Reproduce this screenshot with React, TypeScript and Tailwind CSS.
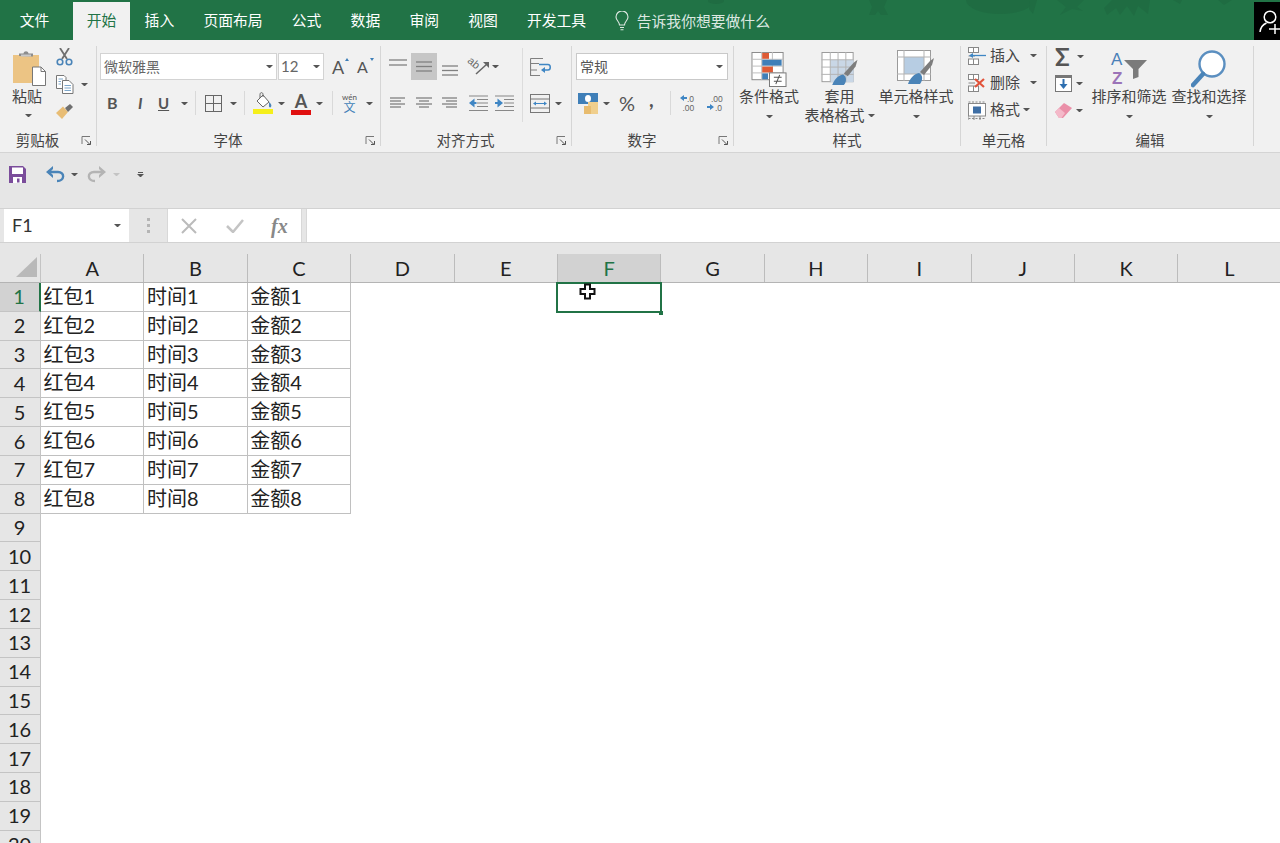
import React from "react";

const Caret = ({ c = "border-t-[#555]", className = "" }: { c?: string; className?: string }) => (
  <span className={`block h-0 w-[7px] shrink-0 border-x-[3px] border-t-[3.5px] border-x-transparent ${c} ${className}`} />
);

const Launcher = () => (
  <svg width="11" height="11" viewBox="0 0 11 11" fill="none" stroke="#777" strokeWidth="1">
    <path d="M1 9V1.500H9" />
    <path d="M4 4.500L9 9.500M9.500 6V9.500H6" stroke="#555" />
  </svg>
);

const Sep = () => <div className="my-[6px] h-[100px] w-px shrink-0 bg-[#d6d6d6]" />;
const MiniSep = ({ className = "" }: { className?: string }) => <span className={`block h-[24px] w-px shrink-0 bg-[#d9d9d9] ${className}`} />;

function Group({ w, label, launcher, children }: { w: string; label: string; launcher?: boolean; children: React.ReactNode }) {
  return (
    <div className={`flex h-[112px] shrink-0 flex-col ${w}`}>
      <div className="flex h-[91px]">{children}</div>
      <div className="flex h-[21px] items-center pb-[2px]">
        <div className="flex-1 text-center text-[14.500px] leading-[20px] text-[#444]">{label}</div>
        {launcher && (
          <div className="flex w-[21px] justify-end pr-[4px]">
            <Launcher />
          </div>
        )}
      </div>
    </div>
  );
}

function Big({ icon, l1, l2, caretInline, className = "" }: { icon: React.ReactNode; l1: string; l2?: string; caretInline?: boolean; className?: string }) {
  return (
    <div className={`flex shrink-0 flex-col items-center pt-[10px] ${className}`}>
      <div className="flex h-[37px] items-start justify-center">{icon}</div>
      <div className="whitespace-nowrap text-[15px] leading-[19px] text-[#444]">{l1}</div>
      <div className="flex h-[19px] items-center justify-center gap-[3px] whitespace-nowrap text-[15px] leading-[19px] text-[#444]">
        {l2}
        <Caret className={caretInline ? "" : "mt-[1px]"} />
      </div>
    </div>
  );
}

const Lines = ({ w, h, rows }: { w: number; h: number; rows: [number, number, number][] }) => (
  <svg width={w} height={h} viewBox={`0 0 ${w} ${h}`} stroke="#808080" strokeWidth="1.300">
    {rows.map(([a, b, y], i) => (
      <path key={i} d={`M${a} ${y}H${b}`} />
    ))}
  </svg>
);

const PasteIcon = () => (
  <svg className="shrink-0" width="34" height="36" viewBox="0 0 34 36">
    <rect x="1" y="5" width="26" height="28" fill="#ecc484" />
    <path d="M7 6V3.500H11.500C12 .5 16 .5 16.500 3.500H21V6.500Z" fill="#8d8d8d" />
    <rect x="9" y="4.500" width="10" height="2" fill="#c9c9c9" />
    <path d="M20.500 17H29L33.500 21.500V35.500H20.500Z" fill="#fff" stroke="#777" />
    <path d="M29 17V21.500H33.500" fill="none" stroke="#777" />
  </svg>
);
const Scissors = () => (
  <svg width="17" height="18" viewBox="0 0 17 18" fill="none">
    <path d="M4 0L11 11M13 0L6 11" stroke="#6f6f6f" strokeWidth="1.800" />
    <circle cx="4" cy="14" r="2.800" stroke="#4a84b8" strokeWidth="1.600" />
    <circle cx="13" cy="14" r="2.800" stroke="#4a84b8" strokeWidth="1.600" />
  </svg>
);
const CopyIcon = () => (
  <svg width="18" height="19" viewBox="0 0 18 19" fill="#fff" stroke="#777">
    <path d="M.5 .5H8L10 2.500V13.500H.5Z" />
    <path d="M6.500 5.500H13L17 9.500V18.500H6.500Z" />
    <path d="M8.500 10.500H15M8.500 13H15M8.500 15.500H15" stroke="#7da7cb" />
    <path d="M2.500 4H7M2.500 6.500H5M2.500 9H5" stroke="#7da7cb" />
  </svg>
);
const BrushIcon = () => (
  <svg width="17" height="16" viewBox="0 0 17 16">
    <path d="M0 9L7 2.500L12 8L6 15Z" fill="#e8bd75" />
    <path d="M9 4L14 0L17 3L12 8Z" fill="#6f6f6f" />
  </svg>
);
const BorderIcon = () => (
  <svg width="17" height="17" viewBox="0 0 17 17" fill="none" stroke="#666">
    <rect x=".5" y=".5" width="16" height="16" />
    <path d="M8.500 0V17M0 8.500H17" />
  </svg>
);
const FillIcon = () => (
  <svg width="20" height="23" viewBox="0 0 20 23">
    <path d="M4 9L10 3L16 10L10 15Z" fill="#fff" stroke="#666" />
    <path d="M7 6V2.500C7 0 10 0 10 2.500V5" fill="none" stroke="#666" />
    <path d="M16 10C18 12 19 13 18 15C17 16 15.500 15 16 13Z" fill="#4a84b8" />
    <rect x="0" y="17" width="20" height="5" fill="#f5ef1b" />
  </svg>
);
const OrientIcon = () => (
  <svg className="overflow-visible" width="21" height="20" viewBox="0 0 21 20">
    <text x="0" y="5" fontSize="11" fill="#666" transform="translate(1 1) rotate(40)" fontFamily="Liberation Sans">ab</text>
    <path d="M7 17L18 7" stroke="#666" strokeWidth="1.500" />
    <path d="M14 5H20V11Z" fill="#666" />
  </svg>
);
const IndentDec = () => (
  <svg width="19" height="17" viewBox="0 0 19 17" stroke="#888" strokeWidth="1.200">
    <path d="M0 1H19M8 4.500H19M8 8H19M8 11.500H19M0 15.500H19" />
    <path d="M0 8L5.500 3.500V12.500Z" fill="#3f86c4" stroke="none" />
    <path d="M4 8H7.500" stroke="#3f86c4" strokeWidth="2" />
  </svg>
);
const IndentInc = () => (
  <svg width="19" height="17" viewBox="0 0 19 17" stroke="#888" strokeWidth="1.200">
    <path d="M0 1H19M9 4.500H19M9 8H19M9 11.500H19M0 15.500H19" />
    <path d="M8 8L2.500 3.500V12.500Z" fill="#3f86c4" stroke="none" />
    <path d="M0 8H4" stroke="#3f86c4" strokeWidth="2" />
  </svg>
);
const WrapIcon = () => (
  <svg width="22" height="20" viewBox="0 0 22 20" fill="none" stroke="#808080" strokeWidth="1.200">
    <path d="M.5 1.500H13M.5 1.500V18.500H10M.5 6.500H9M.5 13H7" />
    <path d="M9 7.500H18C21 7.500 21 13 18 13H13" stroke="#3f86c4" strokeWidth="1.500" />
    <path d="M11 13L15 10V16Z" fill="#3f86c4" stroke="none" />
  </svg>
);
const MergeIcon = () => (
  <svg width="20" height="19" viewBox="0 0 20 19" fill="none" stroke="#777">
    <rect x=".5" y=".5" width="19" height="18" />
    <path d="M0 5H20M0 14H20" />
    <path d="M4 9.500H16" stroke="#3f86c4" />
    <path d="M3 9.500L6 7.500V11.500ZM17 9.500L14 7.500V11.500Z" fill="#3f86c4" stroke="none" />
  </svg>
);
const Accounting = () => (
  <svg width="20" height="21" viewBox="0 0 20 21">
    <rect x="0" y="0" width="20" height="11" fill="#3f7fb8" />
    <ellipse cx="10" cy="5.500" rx="3" ry="3.500" fill="#fff" />
    <rect x="10" y="9" width="10" height="12" fill="#f0cf8d" />
    <rect x="6" y="13" width="7" height="8" fill="#e8bc6f" />
  </svg>
);
const DecInc = () => (
  <svg width="17" height="18" viewBox="0 0 17 18" fontFamily="Liberation Sans" fontSize="8.500" fill="#666">
    <text x="7" y="7.500">.0</text>
    <text x="2.500" y="16.500">.00</text>
    <path d="M0 4L4 1V3H7V5H4V7Z" fill="#3f86c4" />
  </svg>
);
const DecDec = () => (
  <svg width="17" height="18" viewBox="0 0 17 18" fontFamily="Liberation Sans" fontSize="8.500" fill="#666">
    <text x="4" y="7.500">.00</text>
    <text x="8" y="16.500">.0</text>
    <path d="M7 13L3 10V12H0V14H3V16Z" fill="#3f86c4" />
  </svg>
);
const CondIcon = () => (
  <svg className="mt-[2px]" width="36" height="35" viewBox="0 0 36 36">
    <rect x=".5" y=".5" width="32" height="28" fill="#fff" stroke="#8a8a8a" />
    <path d="M0 7.500H33M0 14.500H33M0 21.500H33M10.500 0V29M21.500 0V29" stroke="#bdbdbd" />
    <rect x="11" y="1" width="7" height="6" fill="#de5b35" />
    <rect x="11" y="8" width="20" height="6" fill="#3f7fb8" />
    <rect x="11" y="15" width="11" height="6" fill="#de5b35" />
    <rect x="11" y="22" width="6" height="6" fill="#3f7fb8" />
    <rect x="18.500" y="21.500" width="17" height="14" fill="#fff" stroke="#777" />
    <path d="M23 26H31M23 30H31M29 23.500L25 33" stroke="#555" strokeWidth="1.100" fill="none" />
  </svg>
);
const BrushTail = ({ x, y }: { x: number; y: number }) => (
  <g transform={`translate(${x} ${y})`}>
    <path d="M3 14L13 3L17 0L15 7L7 17Z" fill="#7d7d7d" />
    <path d="M-9 26C-7 20 -3 16 2 15C6 17 6 22 3 26Z" fill="#4a84b8" />
  </g>
);
const TableStyleIcon = () => (
  <svg className="mt-[2px]" width="38" height="36" viewBox="0 0 38 37">
    <rect x=".5" y=".5" width="32" height="30" fill="#fff" stroke="#9a9a9a" />
    <rect x="9" y="8" width="24" height="23" fill="#c9d7e6" />
    <path d="M0 8H33M0 15.500H33M0 23H33M9 0V31M17 0V31M25 0V31" stroke="#b3b3b3" />
    <BrushTail x={20} y={8} />
  </svg>
);
const CellStyleIcon = () => (
  <svg width="38" height="37" viewBox="0 0 38 37">
    <rect x=".5" y=".5" width="33" height="30" fill="#fff" stroke="#9a9a9a" />
    <rect x="7" y="7" width="20" height="17" fill="#b7cde3" />
    <path d="M0 7H34M0 24H34M7 0V31M27 0V31" stroke="#b3b3b3" />
    <BrushTail x={20} y={8} />
  </svg>
);
const InsertIcon = () => (
  <svg width="18" height="18" viewBox="0 0 18 18" fill="#fff" stroke="#888">
    <rect x=".5" y=".5" width="10" height="5" />
    <rect x=".5" y="12" width="10" height="5.500" />
    <path d="M5.500 12V18M5.500 0V5.500M.5 9H7" />
    <path d="M4 8.500H18" stroke="#3f86c4" strokeWidth="1.300" />
    <path d="M1 8.500L5 6V11Z" fill="#3f86c4" stroke="none" />
  </svg>
);
const DeleteIcon = () => (
  <svg width="18" height="18" viewBox="0 0 18 18" fill="#fff" stroke="#888">
    <rect x=".5" y=".5" width="10" height="5" />
    <rect x=".5" y="12" width="10" height="5.500" />
    <path d="M5.500 12V18M5.500 0V5.500M.5 9H7" />
    <path d="M7 5L16 13M16 5L7 13" stroke="#e2533a" strokeWidth="2.200" />
  </svg>
);
const FormatIcon = () => (
  <svg width="18" height="20" viewBox="0 0 18 20" fill="#fff" stroke="#888">
    <path d="M.5 2H17.500M.5 18.500H17.500" strokeDasharray="2 1.500" />
    <rect x=".5" y="3.500" width="17" height="12.500" />
    <rect x="5" y="6.500" width="8" height="7" fill="#3f6fa5" stroke="none" />
    <path d="M0 16V20M6 16V20M12 16V20" />
  </svg>
);
const FillDown = () => (
  <svg width="17" height="17" viewBox="0 0 17 17" fill="#fff" stroke="#777">
    <rect x=".5" y=".5" width="16" height="16" />
    <path d="M0 2H17" strokeWidth="2" />
    <path d="M8.500 4V10" stroke="#2f6fb0" strokeWidth="2" />
    <path d="M4.500 9H12.500L8.500 14Z" fill="#2f6fb0" stroke="none" />
  </svg>
);
const Eraser = () => (
  <svg width="17" height="15" viewBox="0 0 17 15">
    <path d="M0 9L9 0L17 5L8 15H4Z" fill="#ea8fa8" />
    <path d="M0 9L4 5L10 10L6.500 15H4Z" fill="#f4b9c9" />
  </svg>
);
const SortIcon = () => (
  <svg className="overflow-visible" width="36" height="36" viewBox="0 0 36 36" fontFamily="Liberation Sans" fontSize="17">
    <text x="0" y="15" fill="#4a80b8">A</text>
    <text x="1" y="34" fill="#9b73b8" fontWeight="bold">Z</text>
    <path d="M13 10H36L27.500 19V27L22 29V19Z" fill="#7b7b7b" />
  </svg>
);
const FindIcon = () => (
  <svg width="36" height="38" viewBox="0 0 36 38" fill="none">
    <circle cx="21" cy="14" r="12.500" fill="#fff" stroke="#5b8fc0" strokeWidth="2.400" />
    <path d="M12 24L2 35" stroke="#4a84b8" strokeWidth="4.500" strokeLinecap="round" />
  </svg>
);
const SaveIcon = () => (
  <svg width="17" height="17" viewBox="0 0 17 17">
    <path d="M0 0H14L17 3V17H0Z" fill="#7b4d9b" />
    <rect x="3" y="1.500" width="11" height="6.500" fill="#fff" />
    <rect x="4" y="11" width="9" height="6" fill="#fff" />
    <rect x="8" y="12.500" width="2.500" height="4" fill="#7b4d9b" />
  </svg>
);
const Undo = ({ c }: { c: string }) => (
  <svg width="19" height="17" viewBox="0 0 19 17" fill="none">
    <path d="M2 6H12C19 6 19 15 11 15" stroke={c} strokeWidth="2.400" />
    <path d="M0 6L7 0V3L4 6L7 9V12Z" fill={c} />
  </svg>
);
const Redo = ({ c }: { c: string }) => (
  <svg className="-scale-x-100" width="19" height="17" viewBox="0 0 19 17" fill="none">
    <path d="M2 6H12C19 6 19 15 11 15" stroke={c} strokeWidth="2.400" />
    <path d="M0 6L7 0V3L4 6L7 9V12Z" fill={c} />
  </svg>
);
const Bulb = () => (
  <svg width="14" height="20" viewBox="0 0 14 20" fill="none" stroke="#dfe9e3" strokeWidth="1.100">
    <path d="M4.500 14C4.500 10.500 1 9.500 1 6A6 6 0 0 1 13 6C13 9.500 9.500 10.500 9.500 14Z" />
    <path d="M5 16.500H9M5.500 18.800H8.500" />
  </svg>
);
const UserAdd = () => (
  <svg width="26" height="38" viewBox="0 0 26 38" fill="none" stroke="#fff" strokeWidth="1.500">
    <circle cx="16" cy="15" r="5.800" />
    <path d="M6 30C6.500 25 9 22.500 12.500 21" />
    <path d="M15 27H26M21 22V32" />
  </svg>
);
const Pattern = () => (
  <svg className="absolute left-0 top-0" width="1280" height="16" viewBox="0 0 1280 16" fill="#1f6c42">
    <ellipse cx="716" cy="1" rx="8" ry="3" />
    <path d="M869 0H887L884 7L888 15H881L878 11L875 15H869L872 7Z" />
    <ellipse cx="1000" cy="0" rx="34" ry="14" />
    <path d="M1030 0H1037L1033 14L1029 9Z" />
    <path d="M1057 0H1084L1077 7L1083 11L1072 9L1060 15L1066 7Z" opacity="0.8" />
    <path d="M1104 8L1112 0H1150L1148 14L1138 6L1134 16L1127 6L1120 15L1116 8L1107 15Z" />
    <path d="M1173 0H1182L1180 4Z" />
    <path d="M1218 0H1232L1224 5Z" />
  </svg>
);

const Cross = () => (
  <svg className="absolute left-[21px] top-[0px]" width="17" height="17" viewBox="0 0 17 17">
    <path d="M6 1.500H11V6H15.500V11H11V15.500H6V11H1.500V6H6Z" fill="#fff" stroke="#111" strokeWidth="2" />
  </svg>
);

const tabs = ["插入", "页面布局", "公式", "数据", "审阅", "视图", "开发工具"];
const cols = ["A", "B", "C", "D", "E", "F", "G", "H", "I", "J", "K", "L"];
const rows = Array.from({ length: 20 }, (_, i) => i + 1);

export default function App() {
  return (
    <div className="h-[843px] w-[1280px] overflow-hidden bg-white [font-family:Lato,'Noto_Sans_CJK_SC',sans-serif]">
      {/* Title bar */}
      <div className="relative flex h-[40px] items-end bg-[#217346]">
        <Pattern />
        <div className="relative ml-[5px] flex h-[38px] w-[59px] items-center justify-center pb-[2px] text-[14.800px] text-white">文件</div>
        <div className="relative ml-[9px] flex h-[38px] w-[57px] items-center justify-center bg-[#f1f1f1] pb-[1px] text-[14.800px] text-[#217346]">开始</div>
        {tabs.map((t) => (
          <div key={t} className="relative flex h-[38px] items-center px-[14.600px] pb-[2px] text-[14.800px] text-white">
            {t}
          </div>
        ))}
        <div className="relative ml-[14px] flex h-[38px] items-center gap-[8px] text-[14.800px] text-[#dce8e1]">
          <Bulb />
          告诉我你想要做什么
        </div>
        <div className="absolute right-0 top-[2px] h-[38px] w-[26px] overflow-hidden bg-black">
          <UserAdd />
        </div>
      </div>

      {/* Ribbon */}
      <div className="flex h-[113px] border-b border-[#d4d4d4] bg-[#f1f1f1]">
        <Group w="w-[96px]" label="剪贴板" launcher>
          <div className="ml-[12px] flex w-[32px] flex-col pt-[10px]">
            <div className="h-[37px]"><PasteIcon /></div>
            <div className="w-[30px] whitespace-nowrap text-[15px] leading-[19px] text-[#444]">粘贴</div>
            <div className="flex h-[19px] w-[32px] items-center justify-center"><Caret /></div>
          </div>
          <div className="ml-[12px] flex flex-col pt-[8px]">
            <Scissors />
            <div className="mt-[9px] flex items-center gap-[7px]">
              <CopyIcon />
              <Caret />
            </div>
            <div className="mt-[10px]">
              <BrushIcon />
            </div>
          </div>
        </Group>
        <Sep />
        <Group w="w-[283px]" label="字体" launcher>
          <div className="flex flex-col">
            <div className="mt-[13px] flex h-[27px] items-center pl-[3px]">
              <div className="flex h-[27px] w-[177px] items-center justify-between border border-[#d3d3d3] bg-white pl-[3px] pr-[3px] text-[14px] text-[#666]">
                微软雅黑
                <Caret />
              </div>
              <div className="ml-[1px] flex h-[27px] w-[46px] items-center justify-between border border-[#d3d3d3] bg-white pl-[2px] pr-[3px] text-[15px] text-[#666]">
                12
                <Caret />
              </div>
              <div className="relative ml-[8px] w-[14px] text-[18px] leading-none text-[#555]">
                A<span className="absolute right-[-3px] top-[0px] block border-x-[2.500px] border-b-[3px] border-x-transparent border-b-[#3f7fb8]" />
              </div>
              <div className="relative ml-[11px] w-[14px] text-[16px] leading-none text-[#555]">
                A<span className="absolute right-[-3px] top-[-1px] block border-x-[2.500px] border-t-[3px] border-x-transparent border-t-[#3f7fb8]" />
              </div>
            </div>
            <div className="mt-[10px] flex h-[26px] items-center pl-[10px] text-[#555]">
              <span className="w-[12px] text-[16px] font-bold leading-none">B</span>
              <span className="ml-[19px] w-[8px] text-[16px] font-bold italic leading-none">I</span>
              <span className="ml-[12px] w-[12px] text-[15px] font-bold leading-none underline">U</span>
              <Caret className="ml-[11px]" />
              <MiniSep className="ml-[7px]" />
              <span className="ml-[9px] w-[17px]"><BorderIcon /></span>
              <Caret className="ml-[8px]" />
              <MiniSep className="ml-[7px]" />
              <span className="ml-[8px] w-[20px]"><FillIcon /></span>
              <Caret className="ml-[5px]" />
              <span className="relative ml-[6px] flex h-[23px] w-[20px] flex-col items-center">
                <span className="text-[18px] font-bold leading-[18px] text-[#555]">A</span>
                <span className="block h-[5px] w-[20px] bg-[#e01010]" />
              </span>
              <Caret className="ml-[5px]" />
              <MiniSep className="ml-[9px]" />
              <span className="ml-[9px] flex w-[15px] flex-col items-center">
                <span className="text-[8px] leading-[9px] text-[#555]">wén</span>
                <span className="text-[12px] leading-[12px] text-[#3f7fb8]">文</span>
              </span>
              <Caret className="ml-[9px]" />
            </div>
          </div>
        </Group>
        <Sep />
        <Group w="w-[190px]" label="对齐方式" launcher>
          <div className="flex w-[141px] flex-col">
            <div className="mt-[13px] flex h-[27px] items-center">
              <span className="mb-[6px] ml-[7px] w-[20px]"><Lines w={20} h={10} rows={[[1, 19, 1], [1, 19, 6]]} /></span>
              <span className="ml-[3px] flex h-[27px] w-[26px] items-center justify-center bg-[#c6c6c6]"><Lines w={18} h={13} rows={[[1, 17, 2], [1, 17, 6.500], [1, 17, 11]]} /></span>
              <span className="ml-[4px] mt-[8px] w-[18px]"><Lines w={18} h={12} rows={[[1, 17, 1], [1, 17, 5.500], [1, 17, 10]]} /></span>
              <span className="ml-[10px] w-[21px]"><OrientIcon /></span>
              <Caret className="ml-[2px]" />
            </div>
            <div className="mt-[10px] flex h-[26px] items-center">
              <span className="ml-[9px] w-[15px]"><Lines w={15} h={12} rows={[[0, 15, 1], [0, 11, 4], [0, 15, 7], [0, 11, 10]]} /></span>
              <span className="ml-[11px] w-[16px]"><Lines w={16} h={12} rows={[[0, 16, 1], [3, 13, 4], [0, 16, 7], [3, 13, 10]]} /></span>
              <span className="ml-[10px] w-[15px]"><Lines w={15} h={12} rows={[[0, 15, 1], [4, 15, 4], [0, 15, 7], [4, 15, 10]]} /></span>
              <span className="ml-[12px] w-[19px]"><IndentDec /></span>
              <span className="ml-[7px] w-[19px]"><IndentInc /></span>
            </div>
          </div>
          <span className="mt-[8px] block h-[74px] w-px bg-[#dcdcdc]" />
          <div className="ml-[7px] flex flex-col">
            <div className="mt-[13px] flex h-[27px] items-center"><WrapIcon /></div>
            <div className="mt-[10px] flex h-[26px] items-center">
              <MergeIcon />
              <Caret className="ml-[5px]" />
            </div>
          </div>
        </Group>
        <Sep />
        <Group w="w-[161px]" label="数字" launcher>
          <div className="flex flex-col">
            <div className="ml-[4px] mt-[13px] flex h-[27px] w-[152px] items-center justify-between border border-[#c9c9c9] bg-white pl-[3px] pr-[4px] text-[14px] text-[#555]">
              常规
              <Caret />
            </div>
            <div className="mt-[10px] flex h-[26px] items-center">
              <span className="ml-[6px] w-[20px]"><Accounting /></span>
              <Caret className="ml-[5px]" />
              <span className="ml-[9px] w-[16px] whitespace-nowrap text-[20px] leading-none text-[#555]">%</span>
              <span className="mb-[9px] ml-[14px] w-[7px] text-[20px] font-bold leading-none text-[#555]">,</span>
              <MiniSep className="ml-[14px]" />
              <span className="ml-[9px] w-[17px]"><DecInc /></span>
              <span className="ml-[10px] w-[17px]"><DecDec /></span>
            </div>
          </div>
        </Group>
        <Sep />
        <Group w="w-[226px]" label="样式">
          <Big className="ml-[4px] w-[62px]" icon={<CondIcon />} l1="条件格式" />
          <Big className="ml-[3px] w-[73px]" icon={<TableStyleIcon />} l1="套用" l2="表格格式" caretInline />
          <Big className="ml-[2px] w-[76px]" icon={<CellStyleIcon />} l1="单元格样式" />
        </Group>
        <Sep />
        <Group w="w-[85px]" label="单元格">
          <div className="flex flex-col pl-[7px] pt-[2px] text-[15px] text-[#444]">
            <div className="flex h-[27px] items-center">
              <span className="w-[18px]"><InsertIcon /></span>
              <span className="ml-[4px]">插入</span>
              <Caret className="ml-[10px]" />
            </div>
            <div className="flex h-[27px] items-center">
              <span className="w-[18px]"><DeleteIcon /></span>
              <span className="ml-[4px]">删除</span>
              <Caret className="ml-[10px]" />
            </div>
            <div className="flex h-[27px] items-center">
              <span className="w-[18px]"><FormatIcon /></span>
              <span className="ml-[4px]">格式</span>
              <Caret className="ml-[3px]" />
            </div>
          </div>
        </Group>
        <Sep />
        <Group w="w-[206px]" label="编辑">
          <div className="ml-[8px] flex w-[36px] flex-col pt-[3px]">
            <div className="flex h-[27px] items-center">
              <span className="w-[17px] text-[24px] font-bold leading-none text-[#555]">Σ</span>
              <Caret className="ml-[5px]" />
            </div>
            <div className="flex h-[27px] items-center">
              <FillDown />
              <Caret className="ml-[4px]" />
            </div>
            <div className="flex h-[27px] items-center">
              <Eraser />
              <Caret className="ml-[4px]" />
            </div>
          </div>
          <Big className="w-[76px]" icon={<SortIcon />} l1="排序和筛选" />
          <Big className="ml-[4px] w-[76px]" icon={<FindIcon />} l1="查找和选择" />
        </Group>
        <Sep />
      </div>

      {/* Quick access */}
      <div className="flex h-[55px] items-center bg-[#e6e6e6] pb-[13px] pl-[9px]">
        <SaveIcon />
        <span className="ml-[20px]"><Undo c="#4a84b8" /></span>
        <Caret className="ml-[6px]" />
        <span className="ml-[9px]"><Redo c="#b4b4b4" /></span>
        <Caret c="border-t-[#c4c4c4]" className="ml-[7px]" />
        <span className="ml-[17px] flex w-[7px] flex-col items-center gap-[1px]">
          <span className="block h-px w-[5px] bg-[#555]" />
          <Caret />
        </span>
      </div>

      {/* Formula bar */}
      <div className="flex h-[35px] border-y border-[#d2d2d2] bg-[#e6e6e6]">
        <div className="ml-[4px] flex w-[125px] items-center justify-between bg-white pl-[8px] pr-[8px] text-[18px] text-[#333]">
          F1
          <Caret />
        </div>
        <div className="flex w-[38px] flex-col items-center justify-center gap-[3px]">
          <span className="block h-[3px] w-[3px] bg-[#b5b5b5]" />
          <span className="block h-[3px] w-[3px] bg-[#b5b5b5]" />
          <span className="block h-[3px] w-[3px] bg-[#b5b5b5]" />
        </div>
        <div className="flex w-[135px] items-center border-x border-[#d8d8d8] bg-white pl-[13px]">
          <svg width="16" height="16" viewBox="0 0 16 16" stroke="#bbb" strokeWidth="2"><path d="M1 1L15 15M15 1L1 15" /></svg>
          <svg className="ml-[29px]" width="18" height="14" viewBox="0 0 18 14" fill="none" stroke="#c4c4c4" strokeWidth="2.500"><path d="M1 7L7 13L17 1" /></svg>
          <span className="ml-[27px] [font-family:'Liberation_Serif',serif] text-[20px] font-bold italic leading-none text-[#888]">fx</span>
        </div>
        <div className="ml-[4px] flex-1 border-l border-[#d8d8d8] bg-white" />
      </div>

      {/* Spacer */}
      <div className="h-[11px] bg-[#e6e6e6]" />

      {/* Column headers */}
      <div className="flex h-[29px] border-b border-[#b4b4b4] bg-[#e6e6e6]">
        <div className="flex h-[28px] w-[41px] shrink-0 items-end justify-end border-r border-[#c4c4c4] pb-[5px] pr-[3px]">
          <span className="block h-0 w-0 border-b-[20px] border-l-[21px] border-b-[#b9b9b9] border-l-transparent" />
        </div>
        {cols.map((c) => (
          <div
            key={c}
            className={`flex h-[28px] w-[103.400px] shrink-0 items-center justify-center border-r border-[#bcbcbc] pb-[1px] text-[20px] leading-none ${c === "F" ? "bg-[#d2d2d2] text-[#217346]" : "text-[#222]"}`}
          >
            {c}
          </div>
        ))}
      </div>

      {/* Rows */}
      {rows.map((r) => (
        <div key={r} className="flex h-[28.840px]">
          <div className={`flex w-[41px] shrink-0 items-center justify-center border-b border-r border-[#c4c4c4] pb-[1px] pr-[1px] text-[20px] leading-none ${r === 1 ? "border-r-2 border-r-[#217346] bg-[#d2d2d2] text-[#217346]" : "bg-[#e6e6e6] text-[#222]"}`}>
            {r}
          </div>
          {r <= 8 &&
            [`红包${r}`, `时间${r}`, `金额${r}`].map((t) => (
              <div key={t} className="flex w-[103.400px] shrink-0 items-center border-b border-r border-[#c0c0c0] pb-[2px] pl-[2.500px] text-[20px] leading-none text-[#222]">
                {t}
              </div>
            ))}
          {r === 1 && (
            <>
              <div className="w-[206.800px] shrink-0" />
              <div className="relative w-[103.400px] shrink-0">
                <div className="absolute bottom-[-1px] left-[-2px] right-[-1px] top-[-1px] border-2 border-[#217346]" />
                <div className="absolute bottom-[-3px] right-[-2px] h-[4px] w-[4px] bg-[#217346]" />
                <Cross />
              </div>
            </>
          )}
        </div>
      ))}
    </div>
  );
}
